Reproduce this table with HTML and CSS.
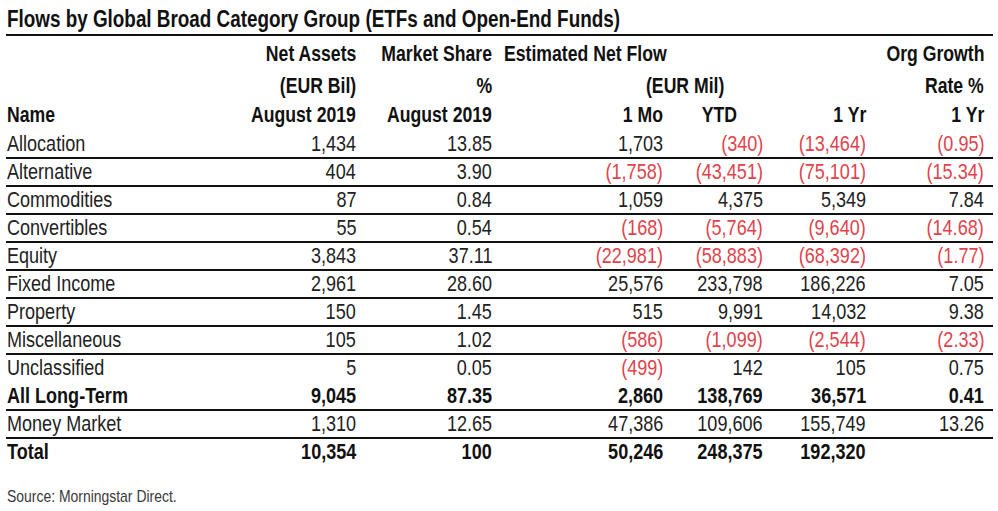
FILE: index.html
```html
<!DOCTYPE html>
<html lang="en">
<head>
<meta charset="utf-8">
<title>Flows by Global Broad Category Group</title>
<link rel="stylesheet" href="styles.css">
</head>
<body>
<div class="sheet">
  <h1 class="title"><span class="t">Flows by Global Broad Category Group (ETFs and Open-End Funds)</span></h1>
  <div class="grid">
    <div class="row head h1">
      <div class="c"></div>
      <div class="c"><span class="t">Net Assets</span></div>
      <div class="c"><span class="t">Market Share</span></div>
      <div class="c span3 left enf"><span class="t">Estimated Net Flow</span></div>
      <div class="c"><span class="t">Org Growth</span></div>
    </div>
    <div class="row head h2">
      <div class="c"></div>
      <div class="c"><span class="t">(EUR Bil)</span></div>
      <div class="c"><span class="t">%</span></div>
      <div class="c span3 left eurmil"><span class="t">(EUR Mil)</span></div>
      <div class="c"><span class="t">Rate %</span></div>
    </div>
    <div class="row head h3">
      <div class="c left"><span class="t">Name</span></div>
      <div class="c"><span class="t">August 2019</span></div>
      <div class="c"><span class="t">August 2019</span></div>
      <div class="c"><span class="t">1 Mo</span></div>
      <div class="c ytdh"><span class="t">YTD</span></div>
      <div class="c"><span class="t">1 Yr</span></div>
      <div class="c"><span class="t">1 Yr</span></div>
    </div>

    <div class="row data">
      <div class="c left"><span class="t">Allocation</span></div>
      <div class="c"><span class="t">1,434</span></div>
      <div class="c"><span class="t">13.85</span></div>
      <div class="c"><span class="t">1,703</span></div>
      <div class="c neg"><span class="t">(340)</span></div>
      <div class="c neg"><span class="t">(13,464)</span></div>
      <div class="c neg"><span class="t">(0.95)</span></div>
    </div>
    <div class="row data">
      <div class="c left"><span class="t">Alternative</span></div>
      <div class="c"><span class="t">404</span></div>
      <div class="c"><span class="t">3.90</span></div>
      <div class="c neg"><span class="t">(1,758)</span></div>
      <div class="c neg"><span class="t">(43,451)</span></div>
      <div class="c neg"><span class="t">(75,101)</span></div>
      <div class="c neg"><span class="t">(15.34)</span></div>
    </div>
    <div class="row data">
      <div class="c left"><span class="t">Commodities</span></div>
      <div class="c"><span class="t">87</span></div>
      <div class="c"><span class="t">0.84</span></div>
      <div class="c"><span class="t">1,059</span></div>
      <div class="c"><span class="t">4,375</span></div>
      <div class="c"><span class="t">5,349</span></div>
      <div class="c"><span class="t">7.84</span></div>
    </div>
    <div class="row data">
      <div class="c left"><span class="t">Convertibles</span></div>
      <div class="c"><span class="t">55</span></div>
      <div class="c"><span class="t">0.54</span></div>
      <div class="c neg"><span class="t">(168)</span></div>
      <div class="c neg"><span class="t">(5,764)</span></div>
      <div class="c neg"><span class="t">(9,640)</span></div>
      <div class="c neg"><span class="t">(14.68)</span></div>
    </div>
    <div class="row data">
      <div class="c left"><span class="t">Equity</span></div>
      <div class="c"><span class="t">3,843</span></div>
      <div class="c"><span class="t">37.11</span></div>
      <div class="c neg"><span class="t">(22,981)</span></div>
      <div class="c neg"><span class="t">(58,883)</span></div>
      <div class="c neg"><span class="t">(68,392)</span></div>
      <div class="c neg"><span class="t">(1.77)</span></div>
    </div>
    <div class="row data">
      <div class="c left"><span class="t">Fixed Income</span></div>
      <div class="c"><span class="t">2,961</span></div>
      <div class="c"><span class="t">28.60</span></div>
      <div class="c"><span class="t">25,576</span></div>
      <div class="c"><span class="t">233,798</span></div>
      <div class="c"><span class="t">186,226</span></div>
      <div class="c"><span class="t">7.05</span></div>
    </div>
    <div class="row data">
      <div class="c left"><span class="t">Property</span></div>
      <div class="c"><span class="t">150</span></div>
      <div class="c"><span class="t">1.45</span></div>
      <div class="c"><span class="t">515</span></div>
      <div class="c"><span class="t">9,991</span></div>
      <div class="c"><span class="t">14,032</span></div>
      <div class="c"><span class="t">9.38</span></div>
    </div>
    <div class="row data">
      <div class="c left"><span class="t">Miscellaneous</span></div>
      <div class="c"><span class="t">105</span></div>
      <div class="c"><span class="t">1.02</span></div>
      <div class="c neg"><span class="t">(586)</span></div>
      <div class="c neg"><span class="t">(1,099)</span></div>
      <div class="c neg"><span class="t">(2,544)</span></div>
      <div class="c neg"><span class="t">(2.33)</span></div>
    </div>
    <div class="row data noline">
      <div class="c left"><span class="t">Unclassified</span></div>
      <div class="c"><span class="t">5</span></div>
      <div class="c"><span class="t">0.05</span></div>
      <div class="c neg"><span class="t">(499)</span></div>
      <div class="c"><span class="t">142</span></div>
      <div class="c"><span class="t">105</span></div>
      <div class="c"><span class="t">0.75</span></div>
    </div>
    <div class="row data strong">
      <div class="c left"><span class="t">All Long-Term</span></div>
      <div class="c"><span class="t">9,045</span></div>
      <div class="c"><span class="t">87.35</span></div>
      <div class="c"><span class="t">2,860</span></div>
      <div class="c"><span class="t">138,769</span></div>
      <div class="c"><span class="t">36,571</span></div>
      <div class="c"><span class="t">0.41</span></div>
    </div>
    <div class="row data">
      <div class="c left"><span class="t">Money Market</span></div>
      <div class="c"><span class="t">1,310</span></div>
      <div class="c"><span class="t">12.65</span></div>
      <div class="c"><span class="t">47,386</span></div>
      <div class="c"><span class="t">109,606</span></div>
      <div class="c"><span class="t">155,749</span></div>
      <div class="c"><span class="t">13.26</span></div>
    </div>
    <div class="row data strong noline">
      <div class="c left"><span class="t">Total</span></div>
      <div class="c"><span class="t">10,354</span></div>
      <div class="c"><span class="t">100</span></div>
      <div class="c"><span class="t">50,246</span></div>
      <div class="c"><span class="t">248,375</span></div>
      <div class="c"><span class="t">192,320</span></div>
      <div class="c"></div>
    </div>
  </div>
  <p class="source"><span class="t">Source: Morningstar Direct.</span></p>
</div>
</body>
</html>
```
FILE: styles.css
```css
html, body {
  margin: 0;
  padding: 0;
  background: #ffffff;
}

body {
  font-family: "Liberation Sans", Arial, sans-serif;
  color: #222222;
}

.sheet {
  width: 987px;
  margin-left: 6px;
}

/* Narrow (Arial Narrow-like) letterforms: each text run is condensed horizontally */
.t {
  display: inline-block;
  white-space: nowrap;
  transform: scaleX(0.82);
  transform-origin: right center;
}

.title {
  margin: 0;
  padding: 5px 0 0 1px;
  font-size: 23px;
  font-weight: 700;
  line-height: 29px;
  color: #111111;
  border-bottom: 2px solid #111111;
}

.title .t,
.source .t,
.left .t {
  transform-origin: left center;
}

.row {
  display: grid;
  grid-template-columns: 239px 111px 136px 171px 100px 103px 127px;
}

.c {
  display: flex;
  justify-content: flex-end;
  align-items: flex-start;
  min-width: 0;
}

.c:last-child {
  padding-right: 9px;
}

.c.left {
  justify-content: flex-start;
  padding-left: 1px;
}

.span3 {
  grid-column: span 3;
}

.head .c {
  font-size: 21.5px;
  font-weight: 700;
  line-height: 24px;
  height: 24px;
  color: #111111;
}

.h1 .c { padding-top: 5.5px; }
.h2 .c { padding-top: 8px; }
.h3 .c { padding-top: 5px; padding-bottom: 4.5px; }

.head .enf { padding-left: 12px; }
.head .eurmil { padding-left: 154px; }
.head .ytdh { padding-right: 26px; }

.data {
  border-bottom: 2px solid #111111;
}

.data.noline {
  border-bottom-color: transparent;
}

.data .c {
  font-size: 22px;
  line-height: 26px;
  height: 26px;
}

.data.strong .c {
  font-weight: 700;
  color: #111111;
}

.data .neg {
  color: #e0434c;
}

.source {
  margin: 20px 0 0 1px;
  font-size: 17px;
  line-height: 20px;
  color: #3a3a3a;
}
```
